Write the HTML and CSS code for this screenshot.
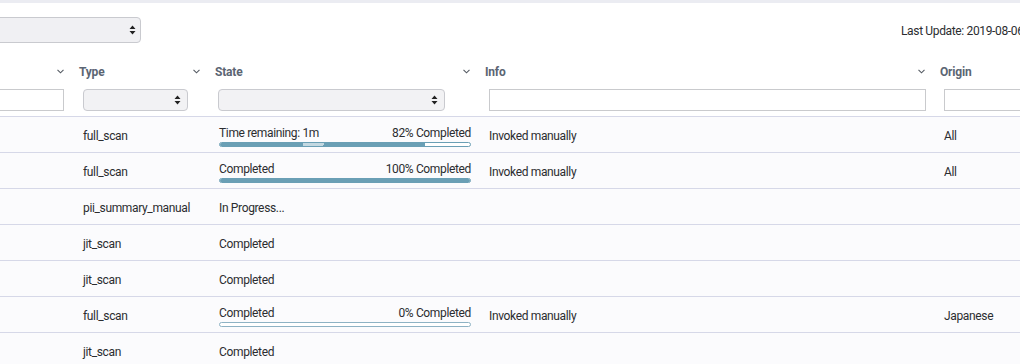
FILE: index.html
```html
<!DOCTYPE html>
<html>
<head>
<meta charset="utf-8">
<title>Scans</title>
<link rel="stylesheet" href="styles.css">
</head>
<body>
<div class="topbar"></div>
<div class="page">
  <div class="toolbar">
    <select class="view-select"><option></option></select>
    <span class="last-update">Last Update: 2019-08-06 14:32:10</span>
  </div>
  <table class="grid">
    <colgroup>
      <col class="c-name">
      <col class="c-type">
      <col class="c-state">
      <col class="c-info">
      <col class="c-origin">
    </colgroup>
    <thead>
      <tr class="head-row">
        <th><span class="label">Name</span><svg class="sort" width="7" height="5" viewBox="0 0 7 5"><polyline points="0.5,0.8 3.5,3.8 6.5,0.8"/></svg></th>
        <th><span class="label">Type</span><svg class="sort" width="7" height="5" viewBox="0 0 7 5"><polyline points="0.5,0.8 3.5,3.8 6.5,0.8"/></svg></th>
        <th><span class="label">State</span><svg class="sort" width="7" height="5" viewBox="0 0 7 5"><polyline points="0.5,0.8 3.5,3.8 6.5,0.8"/></svg></th>
        <th><span class="label">Info</span><svg class="sort" width="7" height="5" viewBox="0 0 7 5"><polyline points="0.5,0.8 3.5,3.8 6.5,0.8"/></svg></th>
        <th><span class="label">Origin</span><svg class="sort" width="7" height="5" viewBox="0 0 7 5"><polyline points="0.5,0.8 3.5,3.8 6.5,0.8"/></svg></th>
      </tr>
      <tr class="filter-row">
        <td><input class="f-input f-name" type="text"></td>
        <td><select class="f-select f-type"><option></option></select></td>
        <td><select class="f-select f-state"><option></option></select></td>
        <td><input class="f-input f-info" type="text"></td>
        <td><input class="f-input f-origin" type="text"></td>
      </tr>
    </thead>
    <tbody>
      <tr>
        <td></td>
        <td>full_scan</td>
        <td>
          <div class="progress">
            <div class="progress-text"><span>Time remaining: 1m</span><span>82% Completed</span></div>
            <div class="bar"><div class="fill striped" style="width: 82%"></div></div>
          </div>
        </td>
        <td>Invoked manually</td>
        <td>All</td>
      </tr>
      <tr>
        <td></td>
        <td>full_scan</td>
        <td>
          <div class="progress">
            <div class="progress-text"><span>Completed</span><span>100% Completed</span></div>
            <div class="bar"><div class="fill" style="width: 100%"></div></div>
          </div>
        </td>
        <td>Invoked manually</td>
        <td>All</td>
      </tr>
      <tr>
        <td></td>
        <td>pii_summary_manual</td>
        <td>In Progress...</td>
        <td></td>
        <td></td>
      </tr>
      <tr>
        <td></td>
        <td>jit_scan</td>
        <td>Completed</td>
        <td></td>
        <td></td>
      </tr>
      <tr>
        <td></td>
        <td>jit_scan</td>
        <td>Completed</td>
        <td></td>
        <td></td>
      </tr>
      <tr>
        <td></td>
        <td>full_scan</td>
        <td>
          <div class="progress">
            <div class="progress-text"><span>Completed</span><span>0% Completed</span></div>
            <div class="bar empty"><div class="fill" style="width: 0%"></div></div>
          </div>
        </td>
        <td>Invoked manually</td>
        <td>Japanese</td>
      </tr>
      <tr>
        <td></td>
        <td>jit_scan</td>
        <td>Completed</td>
        <td></td>
        <td></td>
      </tr>
    </tbody>
  </table>
</div>
</body>
</html>
```

FILE: styles.css
```css
html, body {
  margin: 0;
  padding: 0;
  background: #ffffff;
  overflow: hidden;
}

body {
  font-family: "Roboto", "Liberation Sans", sans-serif;
  font-size: 12px;
  letter-spacing: -0.35px;
  color: #2b2d30;
}

.topbar {
  height: 3px;
  background: #ebecf2;
}

.page {
  width: 1195px;
  margin-left: -110px;
}

.toolbar {
  display: flex;
  align-items: center;
  padding-top: 14px;
  height: 26px;
  margin-bottom: 17px;
}

.view-select {
  appearance: none;
  -webkit-appearance: none;
  width: 251px;
  height: 26px;
  box-sizing: border-box;
  border: 1px solid #c9cacf;
  border-radius: 4px;
  background-color: #f0f0f3;
  background-image: url("data:image/svg+xml,%3Csvg xmlns='http://www.w3.org/2000/svg' width='7' height='10' viewBox='0 0 7 10'%3E%3Cpath d='M3.5 0.5 L6.5 4 L0.5 4 Z M3.5 9.5 L6.5 6 L0.5 6 Z' fill='%23222'/%3E%3C/svg%3E");
  background-repeat: no-repeat;
  background-position: right 4px center;
}

.last-update {
  margin-left: 760px;
  padding-top: 2px;
  white-space: nowrap;
  color: #2b2d30;
}

.grid {
  width: 1195px;
  table-layout: fixed;
  border-collapse: collapse;
  border-spacing: 0;
}

.c-name { width: 184px; }
.c-type { width: 136px; }
.c-state { width: 270px; }
.c-info { width: 455px; }
.c-origin { width: 150px; }

.head-row th {
  height: 24px;
  padding: 0 10px 0 5px;
  text-align: left;
  font-weight: 700;
  color: #5b6573;
  font-size: 12px;
  vertical-align: middle;
}

.label {
  display: inline-block;
  letter-spacing: -0.2px;
}

.sort {
  float: right;
  margin-top: 4px;
  fill: none;
  stroke: #555b63;
  stroke-width: 1.1;
}

.filter-row td {
  height: 32px;
  padding: 0 0 0 9px;
  border-bottom: 1px solid #d6d8e8;
  vertical-align: middle;
}

.f-input {
  display: block;
  box-sizing: border-box;
  height: 22px;
  border: 1px solid #c9cacd;
  border-radius: 0;
  background: #ffffff;
  padding: 0 4px;
  margin: 0;
}

.f-name { width: 166px; margin-left: -1px; }
.f-info { width: 437px; }
.f-origin { width: 130px; }

.f-select {
  display: block;
  appearance: none;
  -webkit-appearance: none;
  box-sizing: border-box;
  height: 22px;
  margin: 0;
  border: 1px solid #c9cacf;
  border-radius: 4px;
  background-color: #f2f2f4;
  background-image: url("data:image/svg+xml,%3Csvg xmlns='http://www.w3.org/2000/svg' width='7' height='10' viewBox='0 0 7 10'%3E%3Cpath d='M3.5 0.5 L6.5 4 L0.5 4 Z M3.5 9.5 L6.5 6 L0.5 6 Z' fill='%23222'/%3E%3C/svg%3E");
  background-repeat: no-repeat;
  background-position: right 6px center;
}

.f-type { width: 105px; }
.f-state { width: 227px; margin-left: -1px; }

tbody tr {
  background: #fbfbfd;
}

tbody td {
  height: 32px;
  padding: 3px 9px 0;
  border-bottom: 1px solid #d6d8e8;
  vertical-align: middle;
  white-space: nowrap;
  overflow: hidden;
}

.progress {
  width: 252px;
}

.progress-text {
  display: flex;
  justify-content: space-between;
  line-height: 14px;
  margin-bottom: 2px;
}

.bar {
  height: 5px;
  box-sizing: border-box;
  border: 1px solid #6a9fb5;
  border-radius: 3px;
  background: #ffffff;
  overflow: hidden;
}

.bar.empty {
  border-color: #8db2c4;
}

.fill {
  height: 100%;
  background: #6a9fb5;
}

.fill.striped {
  background: linear-gradient(108deg, #6a9fb5 0%, #6a9fb5 40.5%, #c3d8e1 40.5%, #c3d8e1 50.5%, #6a9fb5 50.5%, #6a9fb5 100%);
}
```
